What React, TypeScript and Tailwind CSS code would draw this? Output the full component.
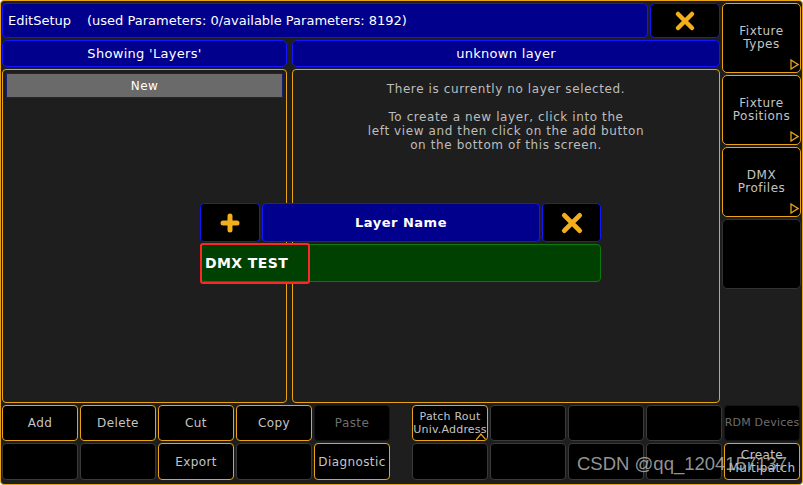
import React from 'react';

const font = { fontFamily: '"DejaVu Sans", Verdana, sans-serif' };

const XIcon = ({ size = 22 }: { size?: number }) => (
  <svg width={size} height={size} viewBox="0 0 22 22">
    <path d="M4 4 L18 18 M18 4 L4 18" stroke="#f2ae1c" strokeWidth="4.5" strokeLinecap="round" />
  </svg>
);

const PlusIcon = () => (
  <svg width="20" height="20" viewBox="0 0 20 20">
    <path d="M10 3 V17 M3 10 H17" stroke="#f2ae1c" strokeWidth="5" strokeLinecap="round" />
  </svg>
);

const Corner = () => (
  <svg className="absolute right-[1px] bottom-[2px]" width="9" height="11" viewBox="0 0 9 11">
    <path d="M1 1 L8 5.5 L1 10 Z" fill="none" stroke="#e8a317" strokeWidth="1.3" />
  </svg>
);

type BtnKind = 'on' | 'off' | 'dim';

const Btn = ({ label, kind = 'on', children }: { label?: string; kind?: BtnKind; children?: React.ReactNode }) => {
  const cls =
    kind === 'on'
      ? 'border-[#e8a317] text-[#c4c4c4]'
      : kind === 'off'
      ? 'border-[#3a3a3a] text-[#c4c4c4]'
      : 'border-[#141414] text-[#6e6e6e]';
  return (
    <div
      className={`relative w-[76px] h-full rounded-[4px] border bg-black flex items-center justify-center overflow-hidden whitespace-nowrap text-[12px] leading-[14px] tracking-[0.4px] text-center ${cls}`}
    >
      {label}
      {children}
    </div>
  );
};

const SideBtn = ({ lines, active = true }: { lines: string[]; active?: boolean }) => (
  <div
    className={`relative h-[70px] rounded-[5px] border bg-black flex flex-col items-center justify-center text-[12px] leading-[13px] tracking-[0.5px] text-[#c4c4c4] ${
      active ? 'border-[#e8a317]' : 'border-[#333333]'
    }`}
  >
    {lines.map((l) => (
      <span key={l}>{l}</span>
    ))}
    {active && <Corner />}
  </div>
);

export default function App() {
  return (
    <div
      className="relative w-[803px] h-[485px] bg-[#1e1e1e] border border-[#e8a317] rounded-[4px] pt-[2px] pl-[1px] pr-[1px] pb-[4px] flex flex-col gap-[2px] overflow-hidden"
      style={font}
    >
      {/* upper area */}
      <div className="flex gap-[2px] h-[400px]">
        <div className="w-[718px] flex flex-col gap-[2px]">
          <div className="flex gap-[2px] h-[35px]">
            <div className="flex-1 rounded-[5px] border border-[#1414ff] bg-[#00008c] flex items-center pl-[5px] text-white text-[13px]">
              <span>EditSetup</span>
              <span className="ml-[16px]">(used Parameters: 0/available Parameters: 8192)</span>
            </div>
            <div className="w-[70px] rounded-[5px] border border-[#1414ff] bg-black flex items-center justify-center">
              <XIcon />
            </div>
          </div>
          <div className="flex gap-[5px] h-[27px]">
            <div className="w-[285px] rounded-[5px] border border-[#1414ff] bg-[#00008c] flex items-center justify-center text-white text-[13px] tracking-[0.3px]">
              Showing 'Layers'
            </div>
            <div className="flex-1 rounded-[5px] border border-[#1414ff] bg-[#00008c] flex items-center justify-center text-white text-[13px] tracking-[0.3px]">
              unknown layer
            </div>
          </div>
          <div className="flex gap-[5px] flex-1">
            <div className="w-[285px] rounded-[4px] border border-[#e8a317] bg-[#1e1e1e] p-[3px]">
              <div className="h-[25px] bg-[#6a6a6a] border border-[#16206e] flex items-center justify-center text-white text-[12px] tracking-[0.4px]">
                New
              </div>
            </div>
            <div className="flex-1 rounded-[4px] border border-[#e8a317] bg-[#1e1e1e] pt-[12px] text-center text-[#bdbdbd] text-[12px] leading-[14px] tracking-[0.6px]">
              <p>There is currently no layer selected.</p>
              <p className="mt-[14px]">To create a new layer, click into the</p>
              <p>left view and then click on the add button</p>
              <p>on the bottom of this screen.</p>
            </div>
          </div>
        </div>
        <div className="w-[79px] flex flex-col gap-[2px]">
          <SideBtn lines={['Fixture', 'Types']} />
          <SideBtn lines={['Fixture', 'Positions']} />
          <SideBtn lines={['DMX', 'Profiles']} />
          <SideBtn lines={[]} active={false} />
        </div>
      </div>

      {/* bottom button rows */}
      <div className="flex h-[36px]">
        <div className="flex gap-[2px]">
          <Btn label="Add" />
          <Btn label="Delete" />
          <Btn label="Cut" />
          <Btn label="Copy" />
          <Btn label="Paste" kind="dim" />
        </div>
        <div className="flex gap-[2px] ml-[22px]">
          <Btn kind="on">
            <span className="text-[11px] leading-[13px] tracking-[0.2px]">
              Patch Rout
              <br />
              Univ.Address
            </span>
            <svg className="absolute right-[1px] bottom-[-1px]" width="10" height="8" viewBox="0 0 10 8">
              <path d="M0 7 L5 1 L10 7" fill="#000" stroke="#e8a317" strokeWidth="1.2" />
            </svg>
          </Btn>
          <Btn kind="off" />
          <Btn kind="off" />
          <Btn kind="off" />
          <Btn kind="dim">
            <span className="text-[11px] tracking-[0.2px]">RDM Devices</span>
          </Btn>
        </div>
      </div>
      <div className="flex h-[37px]">
        <div className="flex gap-[2px]">
          <Btn kind="off" />
          <Btn kind="off" />
          <Btn label="Export" />
          <Btn kind="off" />
          <Btn label="Diagnostic" />
        </div>
        <div className="flex gap-[2px] ml-[22px]">
          <Btn kind="off" />
          <Btn kind="off" />
          <Btn kind="off" />
          <Btn kind="off" />
          <Btn kind="on">
            <span className="leading-[13px]">
              Create
              <br />
              Multipatch
            </span>
          </Btn>
        </div>
      </div>

      {/* Layer name dialog */}
      <div className="absolute left-[199px] top-[202px] w-[401px] flex flex-col gap-[2px]">
        <div className="flex gap-[2px] h-[39px]">
          <div className="w-[60px] rounded-[4px] border border-[#1414ff] bg-black flex items-center justify-center">
            <PlusIcon />
          </div>
          <div className="flex-1 rounded-[4px] border border-[#1414ff] bg-[#00008c] flex items-center justify-center text-white text-[13px] font-bold tracking-[0.5px]">
            Layer Name
          </div>
          <div className="w-[59px] rounded-[4px] border border-[#1414ff] bg-black flex items-center justify-center">
            <XIcon size={24} />
          </div>
        </div>
        <div className="relative h-[38px] rounded-[4px] border border-[#0a7a0a] bg-[#004000] flex items-center pl-[4px] text-white text-[14px] font-bold tracking-[0.4px]">
          DMX TEST
          <div className="absolute left-[-1px] top-[-2px] w-[110px] h-[41px] border-2 border-[#ff2626] rounded-[3px]" />
        </div>
      </div>

      {/* watermark */}
      <div
        className="absolute left-[576px] top-[449px] text-[18.5px] text-[#bcbcbc]/80 whitespace-nowrap"
        style={{ fontFamily: '"Liberation Sans", Arial, sans-serif' }}
      >
        CSDN @qq_1204157137
      </div>
    </div>
  );
}
